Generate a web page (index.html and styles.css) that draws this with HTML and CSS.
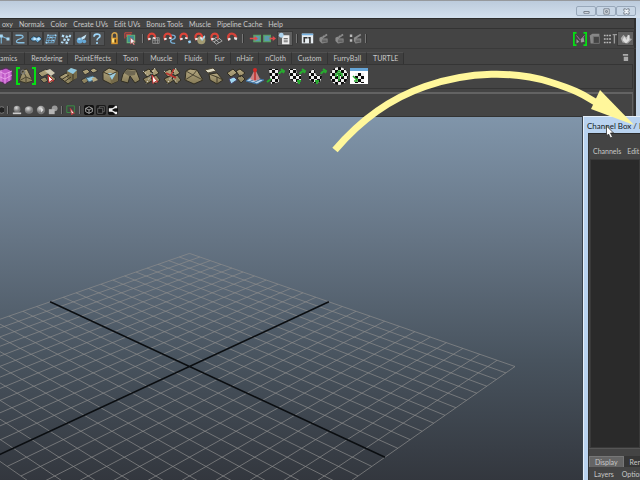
FILE: index.html
```html
<!DOCTYPE html>
<html lang="en">
<head>
    <meta charset="UTF-8">
    <meta name="viewport" content="width=device-width, initial-scale=1.0">
    <title>Channel Box</title>
    <link rel="stylesheet" href="styles.css">
</head>
<body>
    <!-- Shared icons -->
    <svg class="icon-defs" aria-hidden="true">
        <defs>
            <pattern id="check" width="6" height="6" patternUnits="userSpaceOnUse">
                <path fill="#0b0b0b" d="M0 0h6v6H0z"/>
                <path fill="#eee" d="M0 0h3v3H0zM3 3h3v3H3z"/>
            </pattern>
            <linearGradient id="tan" x2="0" y2="1">
                <stop offset="0" stop-color="#b5a881"/>
                <stop offset="1" stop-color="#857a56"/>
            </linearGradient>
            <radialGradient id="ball" cx=".4" cy=".3">
                <stop offset="0" stop-color="#ddd"/>
                <stop offset="1" stop-color="#777"/>
            </radialGradient>
        </defs>
        <symbol id="i-joint" viewBox="0 0 16 16"><path fill="none" stroke="#79b5da" stroke-width="1.5" d="M3 14V4l9 4M1 4h4"/><path fill="#a8d8f3" d="M1 2h4v4H1zM10 6h4v4h-4z"/></symbol>
        <symbol id="i-curve" viewBox="0 0 16 16"><path fill="none" stroke="#86bddf" stroke-width="1.7" d="M2 3h7c4 0 4 3 1 4L5 9c-3 2-2 4 1 4h8"/></symbol>
        <symbol id="i-surface" viewBox="0 0 16 16"><path fill="#72b1dc" stroke="#20303c" d="M0 8l5-4 4 2 3-2 4 4-6 5-3-3-3 1z"/><path fill="#c9ebff" d="M6 6l3 2-3 2-2-2zM11 6l3 2-3 2-2-2z"/></symbol>
        <symbol id="i-lattice" viewBox="0 0 16 16"><path fill="none" stroke="#70a9ce" stroke-width="1.1" d="M4 3h11l-3 10H1zM7 3L4 13M11 3L8 13M3 6h11M2 10h11"/><path fill="#a5d6f5" d="M3 2h2v2H3zM7 5h2v2H7zM10 9h2v2h-2zM1 12h2v2H1zM13 2h2v2h-2z"/></symbol>
        <symbol id="i-dynamics" viewBox="0 0 16 16"><path fill="#b3dcf5" d="M3 2l3 1-1 3-3-1zM8 3l3 1-1 3-3-1zM13 2l2 1-1 3-3-1zM5 7l3 1-1 3-3-1zM10 7l3 1-1 3-3-1zM2 11l3 1-1 2-3-1zM8 11l3 1-1 3-3-1z"/></symbol>
        <symbol id="i-render" viewBox="0 0 16 16"><circle cx="5" cy="10" r="4" fill="#66a8d6"/><circle cx="11" cy="11" r="2.5" fill="#66a8d6"/><path fill="#c5e5f7" d="M7 6l7-4-2 5-4 2zM3 7h3v2H3z"/></symbol>
        <symbol id="i-help" viewBox="0 0 16 16"><path fill="none" stroke="#9ed6f8" stroke-width="2.2" d="M4 5c0-5 8-4 8-1 0 3-4 2-4 6M8 12v2.5"/></symbol>
        <symbol id="i-lock" viewBox="0 0 16 16"><path fill="none" stroke="#d7a54c" stroke-width="1.8" d="M5 8V4c0-4 6-4 6 0v4"/><path fill="#d9952c" d="M4 7h8v8H4z"/><path fill="#fce17a" d="M5 8h3v5H5z"/><path fill="#4b3310" d="M8 9h2v4H8z"/></symbol>
        <symbol id="i-pick" viewBox="0 0 16 16"><path fill="#438c91" stroke="#61b177" stroke-width="1.5" d="M4 4h9v9H4z"/><path fill="none" stroke="#d14b43" stroke-width="1.2" d="M1 8V1h9M3 6V3h6"/><path fill="#f1ecf2" stroke="#ca3435" stroke-width=".6" d="M8 7l6 5-3 .3 2 3-1 .7-2-3-2 2z"/></symbol>
        <symbol id="i-magnet" viewBox="0 0 16 16"><path fill="none" stroke="#d34239" stroke-width="3" d="M4 10C1 5 4 2 7 2s6 3 5 6"/><path fill="#e5e5e5" d="M2 8l3-1 1 2-3 2zM10 6l4 1-1 3-3-1z"/></symbol>
        <symbol id="i-mgrid" viewBox="0 0 16 16"><path fill="none" stroke="#999" d="M7 7h8v7H7zM7 10h8M10 7v7M13 7v7"/><path fill="none" stroke="#dd4439" stroke-width="2.6" d="M3 10C0 5 3 2 6 2s5 3 3 6"/><path fill="#eee" d="M1 8l3-1 1 2-3 1zM8 6l3 1-1 2-3-1z"/></symbol>
        <symbol id="i-mcurve" viewBox="0 0 16 16"><path fill="none" stroke="#79b1d8" stroke-width="1.7" d="M9 4c8-1 7 4 3 5s-4 5 3 5"/><path fill="none" stroke="#dd4439" stroke-width="2.6" d="M3 10C0 5 3 2 6 2s5 3 3 6"/><path fill="#eee" d="M1 8l3-1 1 2-3 1zM8 6l3 1-1 2-3-1z"/></symbol>
        <symbol id="i-mpoint" viewBox="0 0 16 16"><path fill="#99d2f7" d="M11 11l3-1 1 3-3 1z"/><path fill="none" stroke="#dd4439" stroke-width="2.6" d="M3 10C0 5 3 2 6 2s5 3 3 6"/><path fill="#eee" d="M1 8l3-1 1 2-3 1zM8 6l3 1-1 2-3-1z"/></symbol>
        <symbol id="i-mball" viewBox="0 0 16 16"><circle cx="9" cy="10" r="5" fill="#a29a72"/><path fill="#a8d5e8" d="M8 9l5-5 1 2-4 5z"/><path fill="none" stroke="#dd4439" stroke-width="2.6" d="M3 10C0 5 3 2 6 2s5 3 3 6"/><path fill="#eee" d="M1 8l3-1 1 2-3 1zM8 6l3 1-1 2-3-1z"/></symbol>
        <symbol id="i-mplane" viewBox="0 0 16 16"><path fill="none" stroke="#bbb" d="M2 10l7-4 6 5-7 4zM5 8l6 5M5 12l7-4"/><path fill="none" stroke="#dd4439" stroke-width="2.6" d="M3 10C0 5 3 2 6 2s5 3 3 6"/><path fill="#eee" d="M1 8l3-1 1 2-3 1z"/></symbol>
        <symbol id="i-in" viewBox="0 0 16 16"><path fill="#5c9aab" stroke="#58a862" stroke-width="1.5" d="M6 4h8v8H6z"/><path fill="#e14a4b" d="M1 7h6V5l4 3-4 3V9H1z"/></symbol>
        <symbol id="i-out" viewBox="0 0 16 16"><path fill="#5c9aab" stroke="#58a862" stroke-width="1.5" d="M1 4h8v8H1z"/><path fill="#e14a4b" d="M8 7h4V5l4 3-4 3V9H8z"/></symbol>
        <symbol id="i-history" viewBox="0 0 16 16"><path fill="#eee" d="M6 4h8v11H5V8z"/><circle cx="4" cy="4" r="3" fill="#acd1eb"/><path stroke="#555" d="M7 8h5M7 10h5M7 12h5"/></symbol>
        <symbol id="i-view" viewBox="0 0 16 16"><path fill="#e7edf1" d="M1 2h14v12H1z"/><path fill="#75b2e1" d="M1 2h14v2H1z"/><path fill="#333" d="M3 6h5v2H5v5H3zM9 6h3v8h-2V8H9z"/></symbol>
        <symbol id="i-clap" viewBox="0 0 16 16"><path fill="#8c8c8c" d="M3 7l9-5 1 2-6 4h6v5l-7 1-3-3z"/><path stroke="#484848" d="M5 5l2 1M8 3l2 1M6 10h6M6 12h6"/></symbol>
        <symbol id="i-clapset" viewBox="0 0 16 16"><path fill="#bbb" d="M1 3h3v3H1zM1 9h3v3H1z"/><path fill="#8c8c8c" d="M6 7l8-5 1 2-6 4h6v5l-7 1-2-3z"/><path stroke="#484848" d="M8 10h6M8 12h6"/></symbol>
        <symbol id="i-model" viewBox="0 0 16 16"><path fill="none" stroke="#ae74ae" d="M4 4l4 5M9 9l4-5"/><path fill="#999" d="M4 8l3 3-3 2zM9 8l3-2 1 5-4 1z"/><path fill="none" stroke="#05df13" stroke-width="2" d="M4 1H1v14h3M12 1h3v14h-3"/></symbol>
        <symbol id="i-tool" viewBox="0 0 16 16"><path fill="#888" d="M2 4l3-2h8v3H6v8H3z"/><path fill="none" stroke="#777" d="M6 5h7v8H6z"/></symbol>
        <symbol id="i-attr" viewBox="0 0 16 16"><path fill="none" stroke="#bbb" stroke-width="1.5" stroke-dasharray="2 1" d="M1 4h9M1 8h9M1 12h9"/><path fill="none" stroke="#999" stroke-width="1.5" d="M13 3v10M11 3h5"/></symbol>
        <symbol id="i-channel" viewBox="0 0 16 16"><path fill="#aaa" d="M2 7l3-4 3 3 4-3v4l3 1-5 5-6-1z"/><path fill="#ddd" d="M6 5l3 4 1-6 2 1v5l-4 4-4-4z"/></symbol>

        <symbol id="s-cube" viewBox="0 0 20 18"><path fill="#c05bc8" stroke="#562b5c" d="M3 4l8-3 6 3v9l-7 4-7-4z"/><path fill="none" stroke="#efabef" stroke-width=".8" d="M3 4l7 3 7-3M10 7v10M3 9l7 3 7-4M6 3v12M14 5v9"/></symbol>
        <symbol id="s-poly" viewBox="0 0 20 18"><path fill="url(#tan)" stroke="#393628" d="M3 14L7 3l4-1 6 12-7 2z"/><path fill="none" stroke="#4c4735" d="M3 14l7-4 7 3M7 3l3 7v6"/><circle cx="7" cy="5" r="2" fill="none" stroke="#777"/><path fill="none" stroke="#05df13" stroke-width="2" d="M4 1H1v16h3M16 1h3v16h-3"/></symbol>
        <symbol id="s-tiles" viewBox="0 0 20 18"><path fill="url(#tan)" stroke="#333" d="M1 6l8-4 4 4-8 4zM9 11l5-3 5 4-6 5zM3 12l5-2 4 3-5 3z"/><path fill="#cfc9b3" d="M8 4l5-2 5 4-4 3z"/><path fill="#fff" stroke="#bb2328" d="M11 8l6 6-3-.4-2 2.4z"/></symbol>
        <symbol id="s-extrude" viewBox="0 0 20 18"><path fill="url(#tan)" stroke="#302d22" d="M1 10l7-4 10 5-8 6z"/><path fill="#776d4a" d="M9 4l4-3 6 2v8l-6 3-4-3z"/><path fill="#91c8df" d="M9 4l4-3 6 2-4 4z"/><path fill="none" stroke="#3b3628" d="M3 13l8-5M6 15l7-5M15 7v6"/></symbol>
        <symbol id="s-bridge" viewBox="0 0 20 18"><path fill="url(#tan)" stroke="#333" d="M3 4l5-2 3 3-5 3zM11 3l4-2 4 3-5 2zM2 13l6-3 3 3-6 4z"/><path fill="#95c9e2" stroke="#41657a" d="M7 11l7-2 3 3-7 3z"/><path fill="#b5a881" d="M13 11l3-1 3 3-5 2z"/></symbol>
        <symbol id="s-box" viewBox="0 0 20 18"><path fill="url(#tan)" stroke="#302d22" d="M3 5l6-4 9 3v10l-7 3-8-4z"/><path fill="#766b4a" d="M10 8l8-4v10l-7 3z"/><path fill="#9bcde1" d="M8 6h8l-4 7z"/><path fill="none" stroke="#443d2a" d="M3 5l7 3M10 8l8-4"/></symbol>
        <symbol id="s-split" viewBox="0 0 20 18"><path fill="url(#tan)" stroke="#302d22" d="M3 7l4-5 9 1 4 10-5 3-5-7-2 7-7-2z"/><path fill="#6f6852" d="M4 6l3-3 9 1-1 4-6 1z"/></symbol>
        <symbol id="s-cut" viewBox="0 0 20 18"><path fill="url(#tan)" stroke="#302d22" d="M2 5l6-3 4 4-6 4zM9 4l5-3 4 5-5 3zM2 12l6-3 4 4-6 4zM10 11l5-3 4 5-5 4z"/><path stroke="#eee" stroke-dasharray="1 2" d="M2 4l14 12M14 1L5 17"/></symbol>
        <symbol id="s-cross" viewBox="0 0 20 18"><use href="#s-cut"/><path fill="none" stroke="#bc352f" stroke-width="1.6" d="M4 6l10 5M12 2L9 8"/></symbol>
        <symbol id="s-pickcut" viewBox="0 0 20 18"><use href="#s-cut"/><path fill="#fff" stroke="#bf2a2b" d="M11 8l6 7-3-.4-2 2z"/></symbol>
        <symbol id="s-face" viewBox="0 0 20 18"><path fill="url(#tan)" stroke="#302d22" d="M3 4l4-2 7 1 6 10-9 4-9-4z"/><path fill="none" stroke="#4d4734" d="M3 4l7 4 4-5M10 8l10 5M2 13l8-5"/></symbol>
        <symbol id="s-dup" viewBox="0 0 20 18"><path fill="url(#tan)" stroke="#302d22" d="M5 7l8-1 6 7-6 4-7-4z"/><path fill="#dfdbc5" stroke="#4d4635" d="M1 3l8-2 3 3-8 2z"/><path fill="none" stroke="#403b2a" d="M5 7l8 3 6 3M13 10v7"/></symbol>
        <symbol id="s-quads" viewBox="0 0 20 18"><path fill="url(#tan)" stroke="#302d22" d="M2 6l6-4 4 4-6 4zM11 4l4-2 5 4-5 4zM12 11l4-3 4 4-4 4z"/><path fill="#a0d7ef" stroke="#446" d="M4 12l5-2 3 3-6 4z"/></symbol>
        <symbol id="s-cone" viewBox="0 0 20 18"><path fill="#b5d5ed" stroke="#3c6fa0" d="M1 14l5-4 13 3-7 4z"/><path fill="none" stroke="#476f96" d="M4 15l8-4M8 16l8-4"/><path fill="#c98484" d="M9 4h2l4 8-5 2-5-2z"/><path stroke="#c22b28" stroke-width="1.5" d="M10 3v10"/><circle cx="10" cy="3" r="2" fill="#d52925"/></symbol>
        <symbol id="s-uv1" viewBox="0 0 20 18"><path fill="url(#check)" d="M3 2h9l1 13-8 2z"/><path fill="none" stroke="#28aa30" stroke-width="2" d="M1 15l4-3M13 7c1-3 3-3 5-3M15 2l3 2-1 2"/></symbol>
        <symbol id="s-uv2" viewBox="0 0 20 18"><path fill="url(#check)" d="M2 2h7l1 6h4v6l-5 2-6-4z"/><path fill="none" stroke="#28aa30" stroke-width="2" d="M12 13v4M10 14h4M13 7c1-3 3-3 5-3M15 2l3 2-1 2"/></symbol>
        <symbol id="s-uv3" viewBox="0 0 20 18"><path fill="url(#check)" d="M1 5l5-3 2 6 6 1-2 6-6 1-5-4z"/><path fill="none" stroke="#28aa30" stroke-width="2" d="M9 13v4M7 14h4M13 7c1-3 3-3 5-3M15 2l3 2-1 2"/></symbol>
        <symbol id="s-uv4" viewBox="0 0 20 18"><circle cx="10" cy="9" r="9" fill="url(#check)"/><path fill="none" stroke="#28aa30" stroke-width="1.6" d="M10 14V7M7 10V7h6v3M8 6l2-2 2 2"/></symbol>
        <symbol id="s-uv5" viewBox="0 0 20 18"><path fill="#fff" d="M1 1h18v16H1z"/><path fill="#66a5d7" d="M1 1h18v3H1z"/><path fill="url(#check)" d="M6 6h9v10H6z"/><path fill="none" stroke="#28aa30" stroke-width="1.5" d="M4 9l4 4M5 14h3v-3"/></symbol>

        <symbol id="p-half" viewBox="0 0 12 12"><circle cx="2" cy="6" r="4" fill="#222" stroke="#888"/></symbol>
        <symbol id="p-light" viewBox="0 0 12 12"><circle cx="6" cy="5" r="4" fill="url(#ball)"/><path fill="#ccc" d="M1 9h10v2H1z"/></symbol>
        <symbol id="p-ball" viewBox="0 0 12 12"><ellipse cx="6" cy="6" rx="5" ry="4.5" fill="url(#ball)"/></symbol>
        <symbol id="p-shade" viewBox="0 0 12 12"><circle cx="6" cy="6" r="5" fill="url(#ball)"/><path fill="#ddd" d="M6 3l3 3-3 3z"/></symbol>
        <symbol id="p-stack" viewBox="0 0 12 12"><circle cx="8" cy="4" r="3.5" fill="#999"/><path fill="#b5b5b5" d="M1 5h7v6H1z"/></symbol>
        <symbol id="p-select" viewBox="0 0 12 12"><path fill="none" stroke="#3c8c45" stroke-width="1.2" d="M1 1h9v8H1z"/><path fill="#fff" stroke="#c52e31" d="M5 4l5 6-2-.2L7 12z"/></symbol>
        <symbol id="p-cube" viewBox="0 0 12 12"><rect width="12" height="12" rx="2" fill="#111"/><path fill="none" stroke="#bbb" d="M2 4l4-2 4 2v4l-4 2-4-2zl4 2 4-2M6 6v4"/></symbol>
        <symbol id="p-wire" viewBox="0 0 12 12"><rect width="12" height="12" rx="2" fill="#1b1b1b"/><path fill="none" stroke="#666" d="M2 4h6v6H2zM4 2h6v6H8M4 2v2"/></symbol>
        <symbol id="p-nodes" viewBox="0 0 12 12"><rect width="12" height="12" rx="2" fill="#111"/><path fill="none" stroke="#eee" stroke-width="1.5" d="M10 2L3 6l7 4"/><path fill="#eee" d="M1 4h4v4H1zM8 1h3v3H8zM8 8h3v3H8z"/></symbol>
    </svg>

    <div class="app">
        <header class="titlebar">
            <button class="win-btn" aria-label="Minimize"><svg viewBox="0 0 8 8"><path d="M1 4h6v2H1z"/></svg></button>
            <button class="win-btn" aria-label="Maximize"><svg viewBox="0 0 8 8"><path d="M1 1h6v6H1zM3 3h2v2H3z"/></svg></button>
            <button class="win-btn" aria-label="Close"><svg viewBox="0 0 8 8"><path d="M1 1h2l1 1 1-1h2v2L6 4l1 1v2H5L4 6 3 7H1V5l1-1-1-1z"/></svg></button>
        </header>

        <div class="workspace">
            <nav class="menu">
                <button>oxy</button>
                <button>Normals</button>
                <button>Color</button>
                <button>Create UVs</button>
                <button>Edit UVs</button>
                <button>Bonus Tools</button>
                <button>Muscle</button>
                <button>Pipeline Cache</button>
                <button>Help</button>
            </nav>

            <div class="toolbar">
                <div class="tools masks">
                    <button aria-label="Joints"><svg><use href="#i-joint"/></svg></button>
                    <button aria-label="Curves"><svg><use href="#i-curve"/></svg></button>
                    <button aria-label="Surfaces"><svg><use href="#i-surface"/></svg></button>
                    <button aria-label="Deformers"><svg><use href="#i-lattice"/></svg></button>
                    <button aria-label="Dynamics"><svg><use href="#i-dynamics"/></svg></button>
                    <button aria-label="Rendering"><svg><use href="#i-render"/></svg></button>
                    <button aria-label="Miscellaneous"><svg><use href="#i-help"/></svg></button>
                </div>
                <div class="tools locks">
                    <button aria-label="Lock selection"><svg><use href="#i-lock"/></svg></button>
                    <button aria-label="Highlight selection"><svg><use href="#i-pick"/></svg></button>
                </div>
                <span class="sep"></span>
                <div class="tools snaps">
                    <button aria-label="Snap to grids"><svg><use href="#i-mgrid"/></svg></button>
                    <button aria-label="Snap to curves"><svg><use href="#i-mcurve"/></svg></button>
                    <button aria-label="Snap to points"><svg><use href="#i-mpoint"/></svg></button>
                    <button aria-label="Snap to center"><svg><use href="#i-mball"/></svg></button>
                    <button aria-label="Snap to view planes"><svg><use href="#i-mplane"/></svg></button>
                    <button aria-label="Make live"><svg><use href="#i-magnet"/></svg></button>
                </div>
                <span class="sep"></span>
                <div class="tools history">
                    <button aria-label="Inputs"><svg><use href="#i-in"/></svg></button>
                    <button aria-label="Outputs"><svg><use href="#i-out"/></svg></button>
                    <button class="on" aria-label="Construction history"><svg><use href="#i-history"/></svg></button>
                </div>
                <span class="sep"></span>
                <div class="tools renders">
                    <button aria-label="Render view"><svg><use href="#i-view"/></svg></button>
                    <button aria-label="Render frame"><svg><use href="#i-clap"/></svg></button>
                    <button aria-label="IPR render"><svg><use href="#i-clap"/></svg></button>
                    <button aria-label="Render settings"><svg><use href="#i-clapset"/></svg></button>
                </div>
                <span class="sep"></span>
                <div class="tools sidebar-tools">
                    <button aria-label="Modeling toolkit"><svg><use href="#i-model"/></svg></button>
                    <button aria-label="Attribute editor"><svg><use href="#i-tool"/></svg></button>
                    <button aria-label="Tool settings"><svg><use href="#i-attr"/></svg></button>
                    <button class="on" aria-label="Channel box"><svg><use href="#i-channel"/></svg></button>
                </div>
            </div>

            <div class="tabs">
                <button>amics</button>
                <button>Rendering</button>
                <button>PaintEffects</button>
                <button>Toon</button>
                <button>Muscle</button>
                <button>Fluids</button>
                <button>Fur</button>
                <button>nHair</button>
                <button>nCloth</button>
                <button>Custom</button>
                <button>FurryBall</button>
                <button>TURTLE</button>
                <svg class="trash" viewBox="0 0 8 10"><path d="M1 1h6v2H1zM2 4h5v5H2z"/></svg>
            </div>

            <div class="shelf">
                <div class="shelf-items">
                    <button aria-label="Cube"><svg><use href="#s-cube"/></svg></button>
                    <button aria-label="Poly tool"><svg><use href="#s-poly"/></svg></button>
                    <button aria-label="Append"><svg><use href="#s-tiles"/></svg></button>
                    <button aria-label="Extrude"><svg><use href="#s-extrude"/></svg></button>
                    <button aria-label="Bridge"><svg><use href="#s-bridge"/></svg></button>
                    <button aria-label="Bevel"><svg><use href="#s-box"/></svg></button>
                    <button aria-label="Split"><svg><use href="#s-split"/></svg></button>
                    <button aria-label="Merge"><svg><use href="#s-pickcut"/></svg></button>
                    <button aria-label="Collapse"><svg><use href="#s-cross"/></svg></button>
                    <button aria-label="Triangulate"><svg><use href="#s-face"/></svg></button>
                    <button aria-label="Duplicate face"><svg><use href="#s-dup"/></svg></button>
                    <button aria-label="Separate"><svg><use href="#s-quads"/></svg></button>
                    <button aria-label="Soft edge"><svg><use href="#s-cone"/></svg></button>
                    <button aria-label="Planar map"><svg><use href="#s-uv1"/></svg></button>
                    <button aria-label="Cylindrical map"><svg><use href="#s-uv2"/></svg></button>
                    <button aria-label="Spherical map"><svg><use href="#s-uv3"/></svg></button>
                    <button aria-label="Automatic map"><svg><use href="#s-uv4"/></svg></button>
                    <button aria-label="UV editor"><svg><use href="#s-uv5"/></svg></button>
                </div>
            </div>

            <div class="panel-bar">
                <button aria-label="Wireframe"><svg><use href="#p-half"/></svg></button>
                <span class="sep"></span>
                <button aria-label="Lights"><svg><use href="#p-light"/></svg></button>
                <button aria-label="Smooth shade"><svg><use href="#p-ball"/></svg></button>
                <button aria-label="Textured"><svg><use href="#p-shade"/></svg></button>
                <button aria-label="Shadows"><svg><use href="#p-stack"/></svg></button>
                <span class="sep"></span>
                <button aria-label="Isolate select"><svg><use href="#p-select"/></svg></button>
                <span class="sep"></span>
                <button aria-label="X-ray"><svg><use href="#p-cube"/></svg></button>
                <button aria-label="X-ray active"><svg><use href="#p-wire"/></svg></button>
                <button aria-label="X-ray joints"><svg><use href="#p-nodes"/></svg></button>
            </div>
        </div>

        <main class="viewport">
            <svg class="grid" id="grid" width="583" height="363"></svg>
        </main>

        <section class="float-window">
            <h1>Channel Box / L</h1>
            <div class="float-body">
                <nav class="float-menu">
                    <button>Channels</button>
                    <button>Edit</button>
                </nav>
                <div class="channels"></div>
                <div class="splitter"></div>
                <div class="layer-tabs">
                    <button class="active">Display</button>
                    <button>Ren</button>
                </div>
                <nav class="layer-menu">
                    <button>Layers</button>
                    <button>Option</button>
                </nav>
            </div>
        </section>

        <svg class="arrow" width="320" height="100" viewBox="320 60 320 100">
            <path fill="none" stroke="#fff79b" stroke-width="7" d="M335 150C352 130 380 102 425 86.500C470 71 515 71 550 82S585 97 599 104"/>
            <path fill="#fff79b" d="M600 90l34 35-43-16z"/>
            <path fill="#fff" stroke="#333" stroke-width=".8" d="M606.500 126v10l2-2 2 4 2-1-2-4h3z"/>
        </svg>
    </div>

    <script>
        // Ground plane: 12 cells each side of the origin, seen corner-on
        const CELLS = 12;

        function project(u, v) {
            const s = (u - v) / (2 * CELLS);
            const t = (u + v) / (2 * CELLS);
            const depth = 1 + 0.335 * t;
            return (189.5 + 325.5 * s / depth).toFixed(1) + ' ' + (249.5 - 151 * t / depth).toFixed(1);
        }

        function line(a, b) {
            return 'M' + a + 'L' + b;
        }

        let cells = '';
        let axes = line(project(-CELLS, 0), project(CELLS, 0)) + line(project(0, -CELLS), project(0, CELLS));

        for (let i = -CELLS; i <= CELLS; i++) {
            if (i === 0) continue;
            cells += line(project(i, -CELLS), project(i, CELLS));
            cells += line(project(-CELLS, i), project(CELLS, i));
        }

        document.getElementById('grid').innerHTML =
            `<path class="grid-cells" d="${cells}"/><path class="grid-axes" d="${axes}"/>`;
    </script>
</body>
</html>
```
FILE: styles.css
```css
* {
    margin: 0;
    padding: 0;
    box-sizing: border-box;
}

body {
    font-family: Lato, 'Liberation Sans', sans-serif;
    font-size: 7px;
    line-height: 10px;
    color: #c8c8c8;
    background: #444;
    overflow: hidden;
}

button {
    font: inherit;
    color: inherit;
    background: none;
    border: none;
    white-space: nowrap;
}

svg {
    display: block;
}

.icon-defs {
    position: absolute;
    width: 0;
    height: 0;
}

.app {
    position: relative;
    display: flex;
    flex-direction: column;
    height: 100vh;
    overflow: hidden;
}

.titlebar {
    display: flex;
    justify-content: flex-end;
    align-items: flex-start;
    height: 18px;
    padding: 5px 4px 0 0;
    border-top: 1px solid #96999d;
    background: linear-gradient(#bccbdc, #d3e0ee);
}

.win-btn {
    display: flex;
    justify-content: center;
    align-items: center;
    width: 20px;
    height: 10px;
    border: 1px solid #98a8ba;
    border-radius: 2px;
    background: #c8d6e5;
}

.win-btn svg {
    width: 7px;
    height: 7px;
    fill: #eef3f8;
    stroke: #6b7580;
    fill-rule: evenodd;
}

.workspace {
    background: #444;
    border-right: 4px solid #c3d6ea;
    box-shadow: inset -2px 0 #303030, inset 0 1px #2d2d2d;
}

.menu {
    display: flex;
    gap: 6px;
    height: 11px;
    padding: 1px 0 0 2px;
    border-bottom: 1px solid #333;
}

.toolbar {
    display: flex;
    align-items: center;
    height: 20px;
    padding-right: 2px;
    border-bottom: 1px solid #3a3a3a;
}

.tools {
    display: flex;
}

.tools button {
    display: flex;
    justify-content: center;
    align-items: center;
    flex: 1;
    min-width: 0;
    height: 15px;
}

.tools svg {
    flex: none;
    width: 13px;
    height: 13px;
}

.masks {
    width: 108px;
    margin-left: -3px;
}

.masks button,
.tools .on {
    background: #505254;
    border: 1px solid #3a3a3a;
}

.masks svg {
    width: 12px;
    height: 12px;
}

.tools .on {
    background: #606060;
}

.locks {
    width: 33px;
    margin: 0 1px;
}

.snaps {
    width: 94px;
}

.history {
    width: 45px;
    margin: 0 1px 0 2px;
}

.renders {
    width: 63px;
}

.sidebar-tools {
    width: 62px;
    margin-left: auto;
}

.sidebar-tools svg {
    width: 14px;
    height: 14px;
}

.sep {
    width: 2px;
    height: 9px;
    margin: 0 2px;
    border-left: 1px solid #777;
    border-right: 1px solid #333;
}

.tabs {
    display: flex;
    align-items: flex-end;
    height: 15px;
    padding-right: 7px;
}

.tabs button {
    height: 12px;
    padding: 0 5px 1px 6px;
    border-right: 1px solid #333;
    border-top: 1px solid #505050;
    background: #404040;
}

.tabs button:first-child {
    padding: 0 7px 1px 0;
}

.trash {
    width: 7px;
    height: 9px;
    margin: 0 0 2px auto;
    fill: #aaa;
}

.shelf {
    height: 25px;
    margin-right: 3px;
    border: 1px solid #353535;
    border-left: none;
    overflow: hidden;
}

.shelf-items {
    display: flex;
    width: 375px;
    margin: 1px 0 0 -5px;
}

.shelf-items button {
    display: flex;
    justify-content: center;
    flex: 1;
    min-width: 0;
    height: 20px;
    padding-top: 1px;
}

.shelf-items svg {
    flex: none;
    width: 20px;
    height: 18px;
}

.panel-bar {
    display: flex;
    align-items: flex-end;
    gap: 2px;
    height: 25px;
    margin: 3px 3px 0 0;
    padding-bottom: 1px;
    border-top: 2px solid #636363;
    border-right: 1px solid #606060;
    border-bottom: 1px solid #333;
}

.panel-bar button,
.panel-bar svg {
    width: 10px;
    height: 10px;
}

.panel-bar button:first-child {
    width: 4px;
    overflow: hidden;
}

.panel-bar .sep {
    height: 8px;
    margin: 0 1px 1px;
}

.viewport {
    flex: 1;
    min-height: 0;
    overflow: hidden;
    background: linear-gradient(#8095aa, #657484 34%, #48535e 67%, #33373e);
}

.grid-cells,
.grid-axes {
    fill: none;
}

.grid-cells {
    stroke: rgba(140, 140, 140, 0.7);
}

.grid-axes {
    stroke: #0b0e11;
    stroke-width: 1.5px;
}

.float-window {
    position: absolute;
    top: 116px;
    right: 0;
    bottom: 0;
    display: flex;
    flex-direction: column;
    width: 57px;
    padding-left: 4px;
    overflow: hidden;
    background: #b9d3f0;
    border-left: 1px solid #e4eef8;
    border-top: 1px solid #e4eef8;
    box-shadow: -1px 0 #39424c;
}

.float-window h1 {
    height: 16px;
    margin-left: -1px;
    font-size: 8px;
    font-weight: normal;
    line-height: 18px;
    color: #111a26;
    white-space: nowrap;
}

.float-body {
    display: flex;
    flex-direction: column;
    flex: 1;
    background: #444;
    border-left: 1px solid #333;
    border-top: 1px solid #2b2b2b;
}

.float-menu {
    display: flex;
    gap: 6px;
    padding: 12px 0 3px 4px;
}

.channels {
    flex: 1;
    margin-left: 1px;
    background: #2a2a2a;
    border: 1px solid #393939;
}

.splitter {
    height: 8px;
    border-top: 1px solid #555;
}

.layer-tabs {
    display: flex;
    height: 11px;
    background: #363636;
}

.layer-tabs button {
    height: 11px;
    padding: 0 6px;
}

.layer-tabs .active {
    background: #656565;
    border: 1px solid #777;
    border-bottom: none;
    padding: 0 5px;
}

.layer-menu {
    display: flex;
    gap: 8px;
    height: 13px;
    padding: 1px 0 0 5px;
}

.arrow {
    position: absolute;
    top: 60px;
    right: 0;
}
```
